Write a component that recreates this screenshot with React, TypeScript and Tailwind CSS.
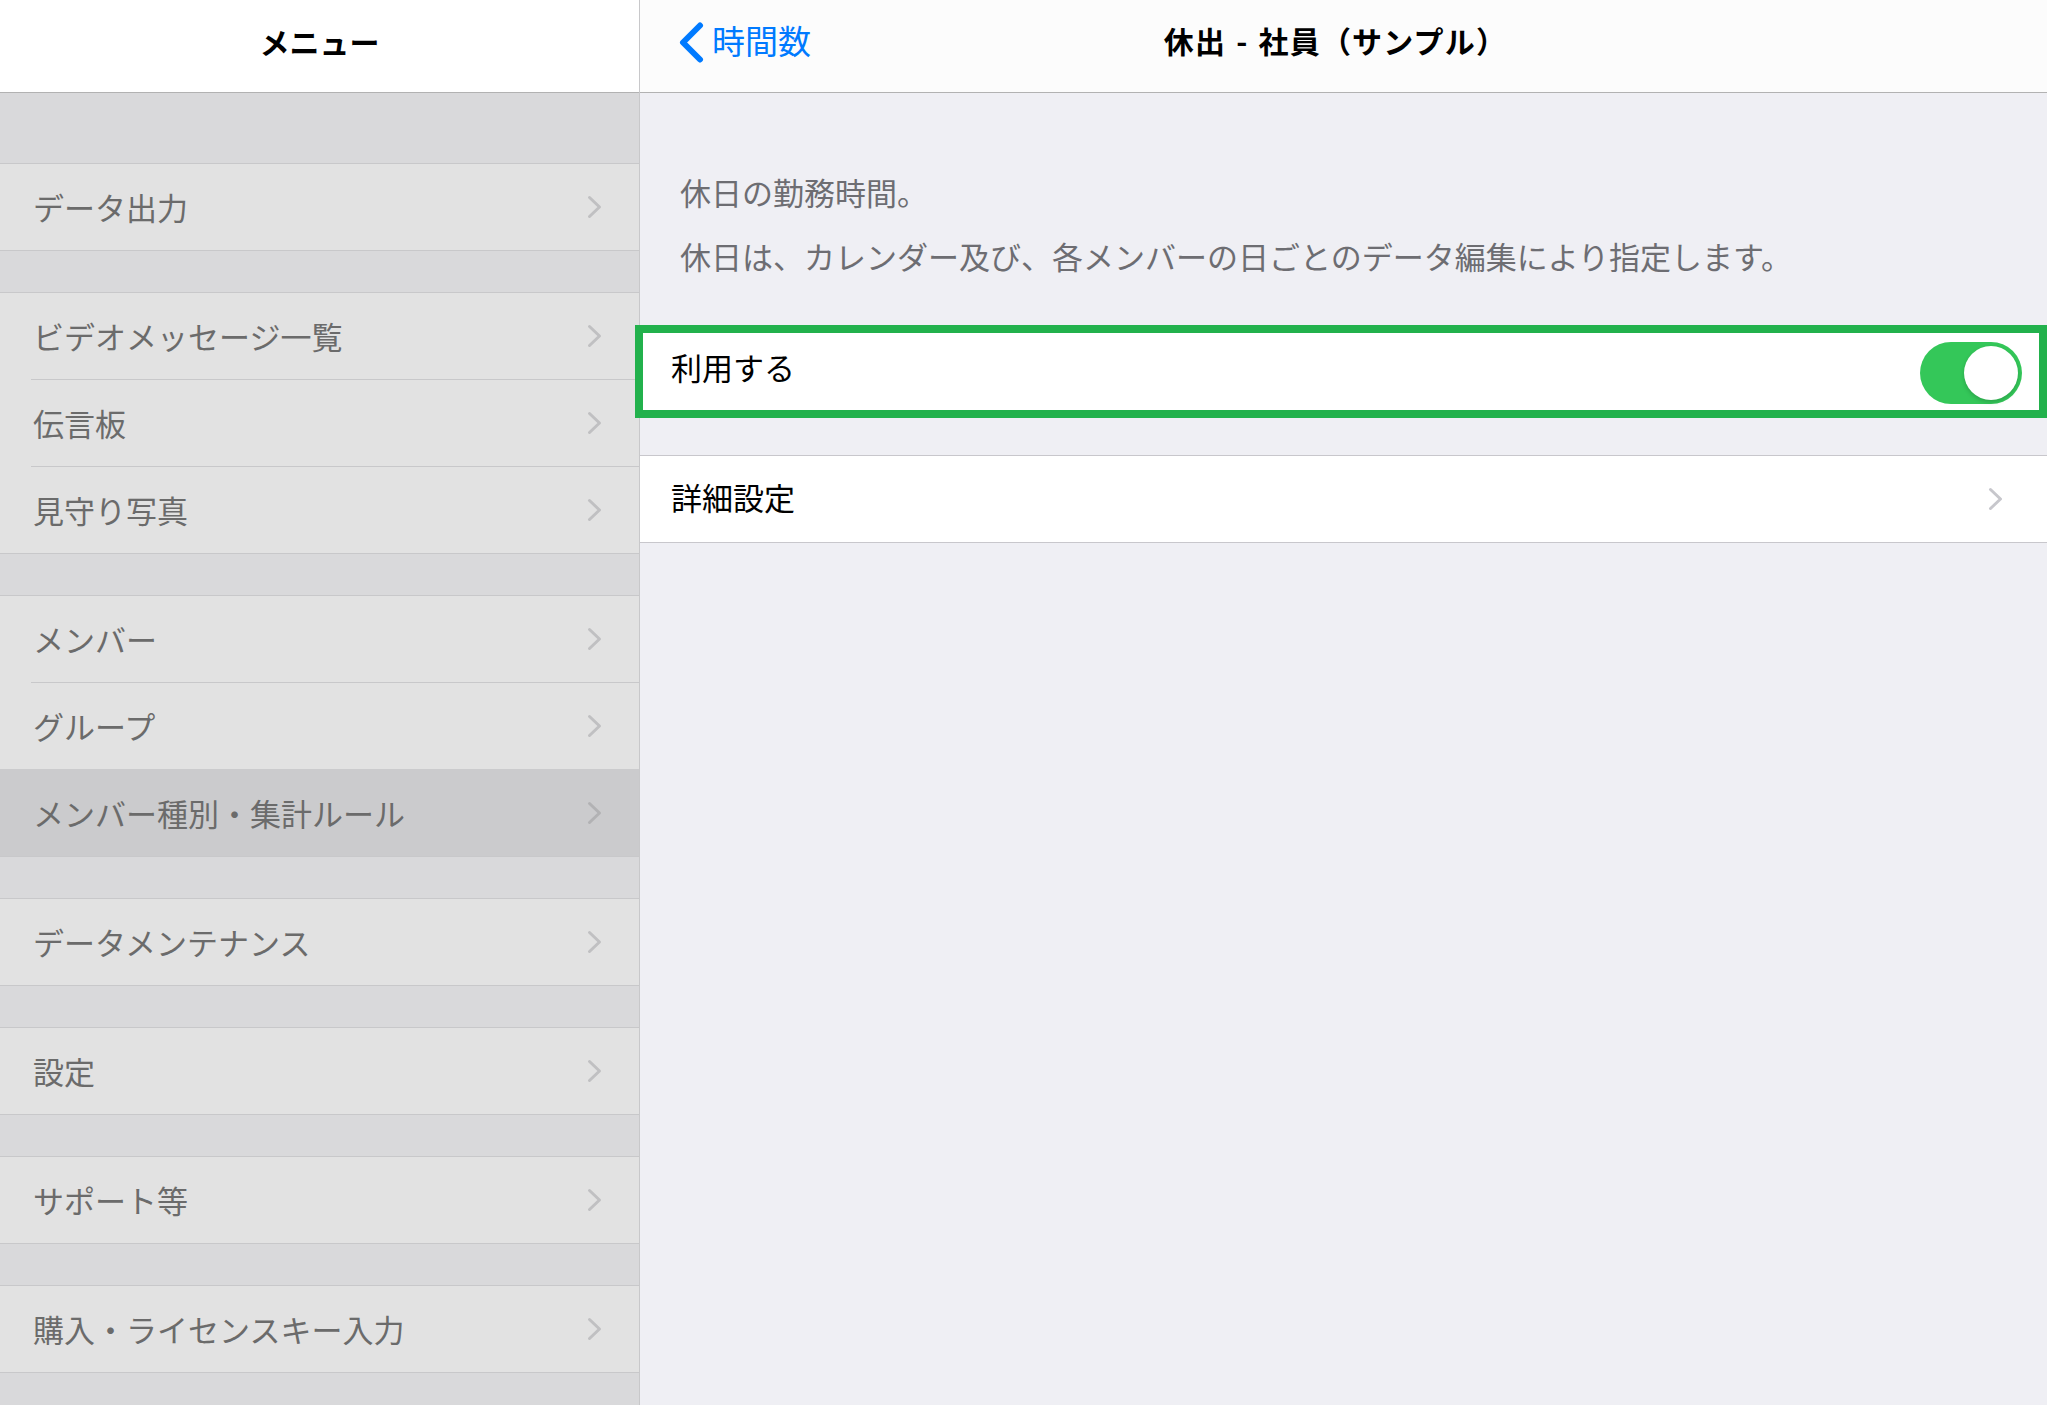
import React from 'react';

const FONT = "font-['Noto_Sans_CJK_JP','Noto_Sans',sans-serif]";

function Chevron({ color = '#c0c0c2' }: { color?: string }) {
  return (
    <svg width="15" height="24" viewBox="0 0 15 24" fill="none">
      <path d="M2.5 2.5 L12.5 12 L2.5 21.5" stroke={color} strokeWidth="3" strokeLinecap="round" strokeLinejoin="round" />
    </svg>
  );
}

type Item = { label: string; selected?: boolean };

const groups: Item[][] = [
  [{ label: 'データ出力' }],
  [{ label: 'ビデオメッセージ一覧' }, { label: '伝言板' }, { label: '見守り写真' }],
  [{ label: 'メンバー' }, { label: 'グループ' }, { label: 'メンバー種別・集計ルール', selected: true }],
  [{ label: 'データメンテナンス' }],
  [{ label: '設定' }],
  [{ label: 'サポート等' }],
  [{ label: '購入・ライセンスキー入力' }],
];

function MenuGroup({ items }: { items: Item[] }) {
  return (
    <div className="border-y border-[#c8c8ca] bg-[#e2e2e2]">
      {items.map((item, i) => (
        <div key={item.label}>
          {i > 0 && (
            <div className={item.selected ? 'h-px bg-[#cbcbcd]' : 'ml-[31px] h-px bg-[#c8c8ca]'} />
          )}
          <div
            className={
              'flex h-[86px] items-center justify-between pl-[33px] pr-[37px] ' +
              (item.selected ? 'bg-[#cbcbcd]' : '')
            }
          >
            <span className="-translate-y-[1px] text-[31px] leading-none text-[#6b6b6b]">{item.label}</span>
            <Chevron color={item.selected ? '#b2b2b4' : '#c0c0c2'} />
          </div>
        </div>
      ))}
    </div>
  );
}

function Toggle() {
  return (
    <div className="flex h-[62px] w-[102px] items-center justify-end rounded-full bg-[#34c759] pr-[4px]">
      <div className="h-[54px] w-[54px] rounded-full bg-white shadow-[0_2px_4px_rgba(0,0,0,0.18)]" />
    </div>
  );
}

export default function App() {
  return (
    <div className={`flex h-[1405px] w-full overflow-hidden ${FONT}`}>
      {/* master */}
      <aside className="flex w-[640px] shrink-0 flex-col border-r border-[#c8c8ca] bg-[#d9d9db]">
        <div className="flex h-[93px] shrink-0 items-center justify-center border-b border-[#b2b2b2] bg-white pb-[10px]">
          <span className="text-[30px] font-bold text-black">メニュー</span>
        </div>
        <div className="flex flex-col gap-[41px] pt-[70px]">
          {groups.map((g, i) => (
            <MenuGroup key={i} items={g} />
          ))}
        </div>
      </aside>

      {/* detail */}
      <main className="flex min-w-0 flex-1 flex-col bg-[#efeff4]">
        <div className="grid h-[93px] shrink-0 grid-cols-[1fr_auto_1fr] items-center border-b border-[#b2b2b2] bg-[#fcfcfc] pb-[8px]">
          <div className="flex items-center gap-[8px] pl-[39px]">
            <svg width="25" height="41" viewBox="0 0 25 41" fill="none">
              <path d="M21 3.5 L4 20.5 L21 37.5" stroke="#007aff" strokeWidth="6" strokeLinecap="round" strokeLinejoin="round" />
            </svg>
            <span className="-translate-y-[2px] text-[33px] leading-none text-[#007aff]">時間数</span>
          </div>
          <span className="-translate-y-[2px] pr-[16px] text-[30px] font-bold tracking-[0.04em] text-black">
            休出<span className="mx-[10px]">-</span>社員（サンプル）
          </span>
          <div />
        </div>

        <div className="pl-[40px] pt-[67px] pb-[41px] text-[31px] leading-[64px] text-[#6d6d72]">
          <p>休日の勤務時間。</p>
          <p>休日は、カレンダー及び、各メンバーの日ごとのデータ編集により指定します。</p>
        </div>

        <div className="relative border-y border-[#c8c7cc] bg-white">
          <div className="flex h-[86px] items-center justify-between pl-[31px] pr-[25px]">
            <span className="-translate-y-[7px] text-[31px] leading-none text-black">利用する</span>
            <Toggle />
          </div>
          <div className="pointer-events-none absolute -top-[5px] -bottom-[2px] -left-[5px] right-0 border-[8px] border-[#22b14c]" />
        </div>

        <div className="mt-[38px] border-y border-[#c8c7cc] bg-white">
          <div className="flex h-[86px] items-center justify-between pl-[31px] pr-[44px]">
            <span className="-translate-y-[3px] text-[31px] leading-none text-black">詳細設定</span>
            <Chevron color="#c7c7cc" />
          </div>
        </div>
      </main>
    </div>
  );
}
